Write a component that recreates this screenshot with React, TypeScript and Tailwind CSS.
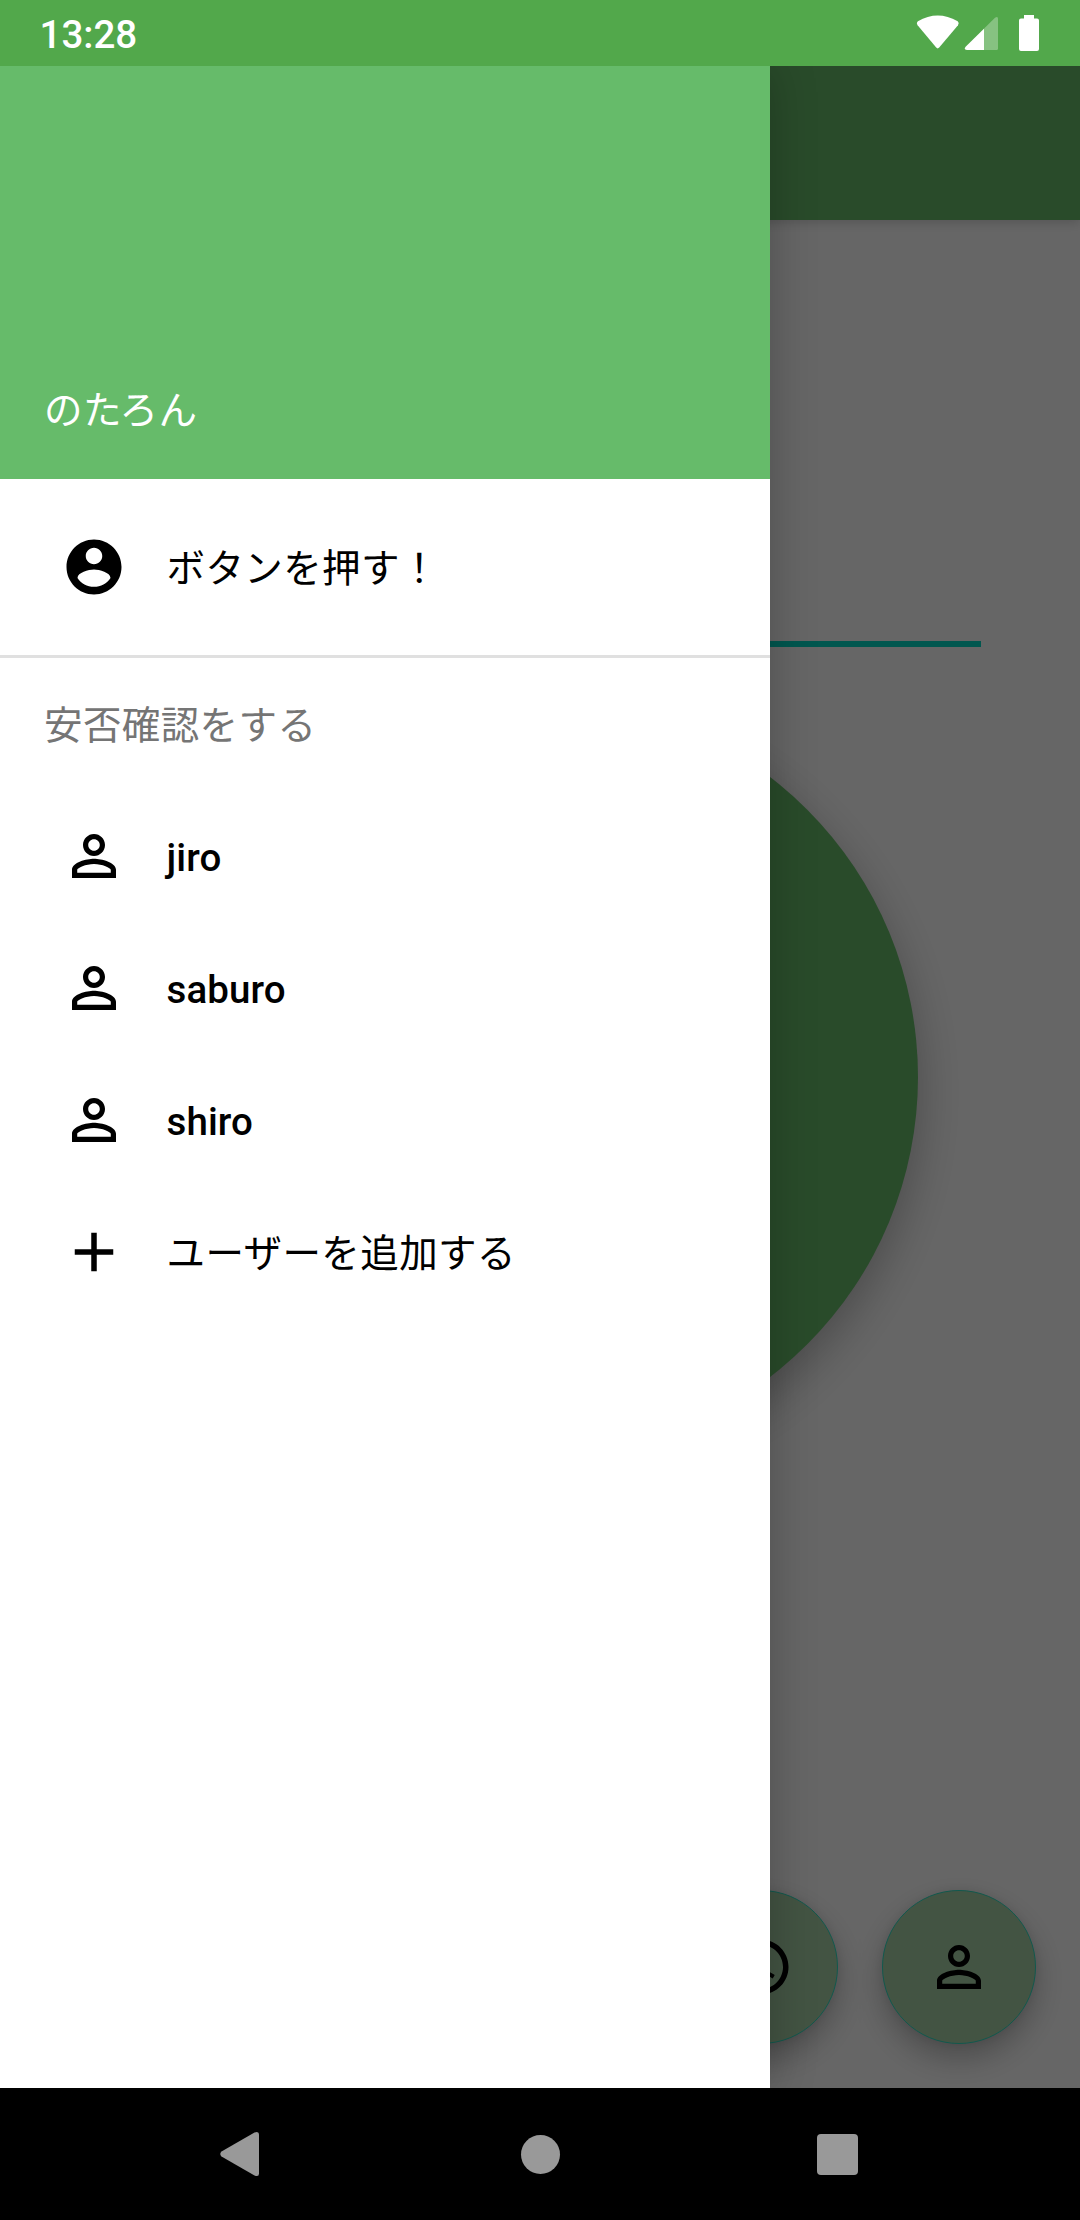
import type { ReactNode } from "react";

const ACCOUNT =
  "M12 2C6.48 2 2 6.48 2 12s4.48 10 10 10 10-4.48 10-10S17.52 2 12 2zm0 3c1.66 0 3 1.34 3 3s-1.34 3-3 3-3-1.34-3-3 1.34-3 3-3zm0 14.2c-2.5 0-4.71-1.28-6-3.22.03-1.99 4-3.08 6-3.08 1.99 0 5.97 1.09 6 3.08-1.29 1.94-3.5 3.22-6 3.22z";
const PERSON =
  "M12 5.9c1.16 0 2.1.94 2.1 2.1s-.94 2.1-2.1 2.1S9.9 9.16 9.9 8s.94-2.1 2.1-2.1m0 9c2.97 0 6.1 1.46 6.1 2.1v1.1H5.9V17c0-.64 3.13-2.1 6.1-2.1M12 4C9.79 4 8 5.79 8 8s1.79 4 4 4 4-1.79 4-4-1.79-4-4-4zm0 9c-2.67 0-8 1.34-8 4v3h16v-3c0-2.66-5.33-4-8-4z";
const ADD = "M19 13h-6v6h-2v-6H5v-2h6V5h2v6h6v2z";
const CLOCK =
  "M11.99 2C6.47 2 2 6.48 2 12s4.47 10 9.99 10C17.52 22 22 17.52 22 12S17.52 2 11.99 2zM12 20c-4.42 0-8-3.58-8-8s3.58-8 8-8 8 3.58 8 8-3.58 8-8 8zm.5-13H11v6l5.25 3.15.75-1.23-4.5-2.67z";

function Icon({ d }: { d: string }) {
  return (
    <svg viewBox="0 0 24 24" className="size-[66px] shrink-0 fill-black">
      <path d={d} />
    </svg>
  );
}

function DrawerItem({ icon, children, latin = false }: { icon: string; children: ReactNode; latin?: boolean }) {
  return (
    <li className="flex h-[132px] items-center gap-[39.5px] pl-[61px]">
      <Icon d={icon} />
      <span className={latin ? "pt-1 font-medium tracking-[0.1px]" : "pt-1 font-normal tracking-[0.4px]"}>{children}</span>
    </li>
  );
}

function Fab({ icon }: { icon: string }) {
  return (
    <button className="flex size-[154px] items-center justify-center rounded-full border border-[#2bdcc0] bg-[#a9d2a9] shadow-[0_14px_30px_rgba(0,0,0,0.26),0_0_10px_rgba(0,0,0,0.08)]">
      <Icon d={icon} />
    </button>
  );
}

function StatusBar() {
  return (
    <header className="flex h-[66px] items-center justify-between bg-[#52a84b] pl-[39.5px] pr-[41px] text-white">
      <span className="pt-[5px] text-[38.5px] font-medium leading-none">13:28</span>
      <svg viewBox="0 0 122 36" className="h-9 w-[122px] overflow-visible fill-white">
        <path d="M.6 10.200Q-1 8 .9 6.300Q20.600 -5.500 40.700 6.300Q42.600 8 41 10.200L22.200 32.600Q20.700 34.200 19.200 32.600Z" />
        <path d="M48.700 31.800L78 2.800Q81 .6 81 4V33.500Q81 35 79.500 35H50Q46.300 34.600 48.700 31.800Z" fillOpacity=".3" />
        <path d="M48.700 31.800L67 13.700V35H50Q46.300 34.600 48.700 31.800Z" />
        <path d="M107 0H117V3.500H120Q122 3.500 122 5.500V34Q122 36 120 36H104Q102 36 102 34V5.500Q102 3.500 104 3.500H107Z" />
      </svg>
    </header>
  );
}

function Drawer() {
  return (
    <aside className="absolute inset-y-0 left-0 w-[770px] bg-white text-black shadow-[0_0_44px_rgba(0,0,0,0.24)]">
      <div className="flex h-[413px] items-end bg-[#66bb6a] px-11 pb-[39px] tracking-[0.4px] text-white">のたろん</div>
      <ul className="border-b-[3px] border-[#e0e0e0] py-[22px]">
        <DrawerItem icon={ACCOUNT}>ボタンを押す！</DrawerItem>
      </ul>
      <h2 className="flex h-[132px] items-center pl-11 pt-1 tracking-[0.4px] text-[#757575]">安否確認をする</h2>
      <ul>
        <DrawerItem icon={PERSON} latin>jiro</DrawerItem>
        <DrawerItem icon={PERSON} latin>saburo</DrawerItem>
        <DrawerItem icon={PERSON} latin>shiro</DrawerItem>
        <DrawerItem icon={ADD}>ユーザーを追加する</DrawerItem>
      </ul>
    </aside>
  );
}

export default function App() {
  return (
    <div className="flex h-[2220px] w-[1080px] flex-col overflow-hidden font-[Roboto,'Noto_Sans_CJK_JP',sans-serif] text-[38.5px]">
      <StatusBar />
      <div className="relative h-[2022px] overflow-hidden">
        <main className="flex h-full flex-col bg-white">
          <div className="h-[154px] shrink-0 bg-[#66bb6a] shadow-[0_3px_10px_rgba(0,0,0,0.16)]" />
          <div className="mx-[99px] mt-[421px] h-1.5 shrink-0 bg-[#03dac5]" />
          <div className="mt-[52px] size-[756px] shrink-0 self-center rounded-full bg-[#66bb6a] shadow-[0_16px_46px_rgba(0,0,0,0.28)]" />
          <div className="mt-auto flex justify-end gap-11 pb-11 pr-11">
            <Fab icon={CLOCK} />
            <Fab icon={PERSON} />
          </div>
        </main>
        <div className="absolute inset-0 bg-black/60" />
        <Drawer />
      </div>
      <nav className="flex h-[132px] items-center justify-between bg-black pl-[220px] pr-[222px]">
        <svg viewBox="0 0 39 46" className="h-[46px] w-[39px] fill-[#999]">
          <path d="M1.500 20.500L34.500 1.500Q39 -.3 39 3.500V42.500Q39 46.300 34.500 44.500L1.500 25.500Q-1 23 1.500 20.500Z" />
        </svg>
        <span className="ml-[5px] size-[39px] rounded-full bg-[#999]" />
        <span className="size-[41px] rounded-[4px] bg-[#999]" />
      </nav>
    </div>
  );
}
